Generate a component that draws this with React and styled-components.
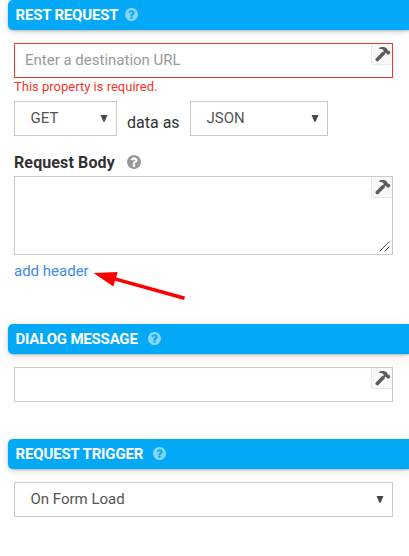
import React from "react";
import styled, { createGlobalStyle } from "styled-components";

const GlobalStyle = createGlobalStyle`
  *, *::before, *::after { box-sizing: border-box; }
  body { margin: 0; background: #fff; overflow: hidden; }
  body, input, textarea { font-family: Roboto, "Noto Sans", sans-serif; }
`;

const Panel = styled.main`
  width: 409px;
  height: 556px;
  padding-left: 8px;
  overflow: hidden;
  color: #333;
  font-size: 15px;
`;

const Section = styled.section`
  height: ${(p) => p.$height}px;
`;

const SectionHeader = styled.h2`
  display: flex;
  align-items: center;
  gap: ${(p) => p.$gap}px;
  height: 30px;
  margin: 0;
  padding: 0 0 1px 7.5px;
  border-radius: 5px 0 0 5px;
  background: #03a9f7;
  box-shadow: 0 1px 2px rgba(0, 0, 0, 0.22), 0 2px 9px rgba(0, 0, 0, 0.14);
  color: #fff;
  font-size: 15px;
  font-weight: 700;
  letter-spacing: ${(p) => p.$tracking}px;
  white-space: nowrap;
`;

const HelpSvg = styled.svg`
  flex: none;
  width: ${(p) => p.$size}px;
  height: ${(p) => p.$size}px;
  fill: ${(p) => p.$color};
`;

const Fields = styled.div`
  padding: 13px 16px 0 6px;
`;

const Field = styled.div`
  position: relative;
  display: flex;
`;

const TextInput = styled.input`
  width: 100%;
  height: 35px;
  margin: 0;
  padding: 0 10px 1px;
  border: 1px solid ${(p) => (p.$invalid ? "#f0372d" : "#c8c8c8")};
  border-radius: 0;
  outline: none;
  background: #fff;
  font-size: 15px;
  &::placeholder { color: #999; opacity: 1; }
`;

const TextArea = styled.textarea`
  display: block;
  width: 100%;
  height: 79px;
  margin: 0;
  border: 1px solid #c8c8c8;
  border-radius: 0;
  outline: none;
  resize: none;
`;

const ToolButton = styled.button`
  position: absolute;
  top: 1px;
  right: 1px;
  display: grid;
  place-items: center;
  width: 21px;
  height: 21px;
  padding: 0;
  border: solid #e9e9e9;
  border-width: 0 0 1px 1px;
  border-radius: 0 0 0 2px;
  background: #f8f8f8;
`;

const Grip = styled.svg`
  position: absolute;
  right: 3px;
  bottom: 3px;
  width: 11px;
  height: 11px;
`;

const ErrorText = styled.p`
  height: 23px;
  margin: 0;
  color: #f0372d;
  font-size: 13px;
  line-height: 18px;
`;

const Row = styled.div`
  display: flex;
  height: 35px;
`;

const SelectBox = styled.div`
  display: flex;
  align-items: center;
  justify-content: space-between;
  width: ${(p) => p.$width};
  height: 35px;
  padding: 0 8px 1px 15.5px;
  border: 1px solid #c8c8c8;
  color: #555;
`;

const Caret = styled.svg`
  width: 8px;
  height: 8px;
  fill: #484848;
`;

const Joiner = styled.span`
  width: 73px;
  padding-left: 10px;
  font-size: 16px;
  line-height: 43px;
`;

const Label = styled.div`
  display: flex;
  align-items: center;
  gap: 12px;
  height: 40px;
  padding-top: 12px;
  font-size: 16px;
  font-weight: 700;
  letter-spacing: 0.12px;
`;

const AddLink = styled.a`
  display: block;
  width: max-content;
  color: #3b8af5;
  line-height: 32px;
  text-decoration: none;
`;

const Arrow = styled.svg`
  position: absolute;
  left: 93px;
  top: 268px;
  width: 94px;
  height: 34px;
  pointer-events: none;
`;

function HelpIcon({ size = 13, color = "#86d5fb" }) {
  return (
    <HelpSvg $size={size} $color={color} viewBox="128 128 1536 1536">
      <path d="M1024 1376v-192q0-14-9-23t-23-9h-192q-14 0-23 9t-9 23v192q0 14 9 23t23 9h192q14 0 23-9t9-23zm256-672q0-88-55.500-163t-138.500-116-170-41q-243 0-371 213-15 24 8 42l132 100q7 6 19 6 16 0 25-12 53-68 86-92 34-24 86-24 48 0 85.500 26t37.500 59q0 38-20 61t-68 45q-63 28-115.500 86.500t-52.500 125.500v36q0 14 9 23t23 9h192q14 0 23-9t9-23q0-19 21.500-49.500t54.500-49.500q32-18 49-28.500t46-35 44.500-48 28-60.500 12.500-81zm384 192q0 209-103 385.500t-279.500 279.500-385.500 103-385.500-103-279.500-279.500-103-385.500 103-385.500 279.500-279.500 385.500-103 385.500 103 279.500 279.500 103 385.500z" />
    </HelpSvg>
  );
}

function HammerButton() {
  return (
    <ToolButton aria-label="Build value">
      <svg width="20" height="20" viewBox="0 0.4 20 20" fill="#5c5c5c">
        <path d="M6.800 4.500C8.500 2.900 12.500 2.900 14.800 4.800L16.200 7.500 17.200 7 18.500 9.400 16.200 11.500 14.600 10.200 14 9.200 12.600 9.800 13 10.600 6.400 17.400Q5.200 18.300 4 17.200 2.800 15.800 3.800 14.800L10.400 8.200 11.200 8.600 11.700 7.500Q11 4.900 6.800 5.100Z" />
      </svg>
    </ToolButton>
  );
}

function Select({ width, children }) {
  return (
    <SelectBox $width={width}>
      {children}
      <Caret viewBox="0 0 8 8"><path d="M.5 1H7.500L4.600 7.800H3.400Z" /></Caret>
    </SelectBox>
  );
}

export default function App() {
  return (
    <>
      <GlobalStyle />
      <Panel>
        <Section $height={324}>
          <SectionHeader $gap={7} $tracking={-0.2}>REST REQUEST <HelpIcon /></SectionHeader>
          <Fields>
            <Field>
              <TextInput $invalid placeholder="Enter a destination URL" />
              <HammerButton />
            </Field>
            <ErrorText>This property is required.</ErrorText>
            <Row>
              <Select width="103px">GET</Select>
              <Joiner>data as</Joiner>
              <Select width="138px">JSON</Select>
            </Row>
            <Label>Request Body <HelpIcon size={14} color="#999" /></Label>
            <Field>
              <TextArea aria-label="Request Body" />
              <HammerButton />
              <Grip viewBox="0 0 11 11" stroke="#555" strokeWidth="1">
                <path d="M.5 10.500 10.500.500M5.500 10.500 10.500 5.500" />
              </Grip>
            </Field>
            <AddLink>add header</AddLink>
          </Fields>
        </Section>
        <Section $height={115}>
          <SectionHeader $gap={10.5} $tracking={-0.2}>DIALOG MESSAGE <HelpIcon /></SectionHeader>
          <Fields>
            <Field>
              <TextInput aria-label="Dialog message" />
              <HammerButton />
            </Field>
          </Fields>
        </Section>
        <Section $height={117}>
          <SectionHeader $gap={10} $tracking={-0.15}>REQUEST TRIGGER <HelpIcon /></SectionHeader>
          <Fields>
            <Select width="100%">On Form Load</Select>
          </Fields>
        </Section>
      </Panel>
      <Arrow viewBox="0 0 94 34" fill="#f00">
        <path d="M.5 5 24.500 4 23.300 9.500 92 28.500 91 32 22 12.700 20.300 18.500Z" />
      </Arrow>
    </>
  );
}
